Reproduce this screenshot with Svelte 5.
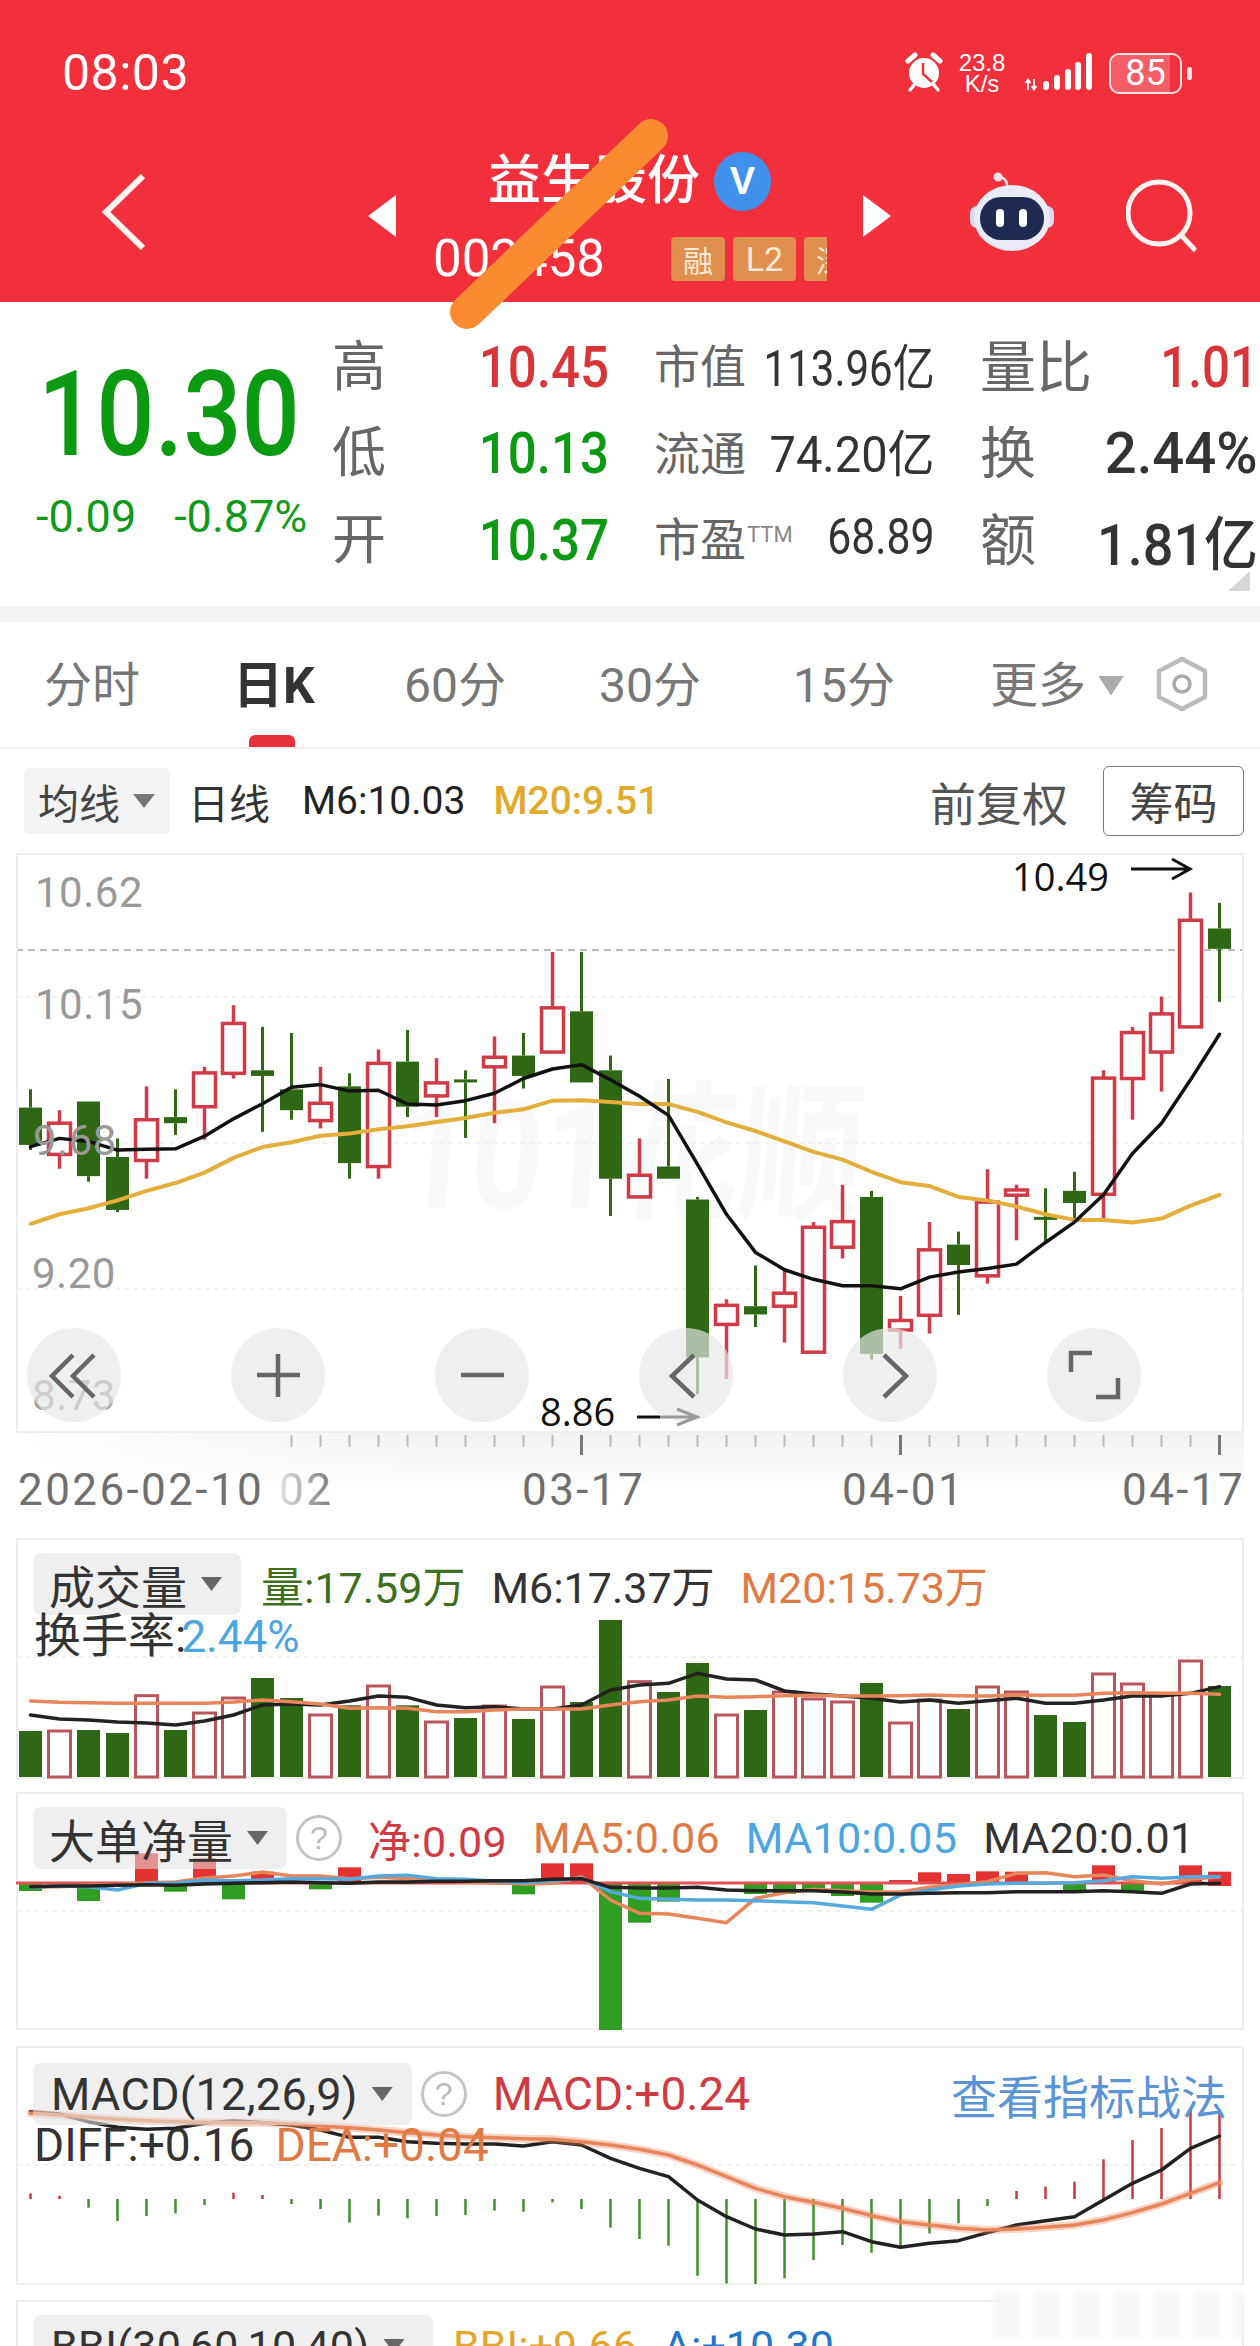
<script>
  // Candle x position, all charts share the same 42 day columns
  const colX = (i) => 30.5 + 29 * i;

  // Chart values below are sampled off the chart, these map them to page y
  const klineY = (v) => 850 + v / 2.306;
  const subY = (v) => 1530 + v / 3;
  const macdY = (v) => 2030 + v / 3;
  const pts = (arr, toY) => arr.map((v, i) => `${colX(i)},${toY(v)}`).join(' ');

  // [high, bodyTop, bodyBottom, low, up?]
  const candles = [
    [552,594,680,692,0],[600,630,702,735,1],[580,580,752,765,0],[665,708,830,835,0],
    [545,622,716,758,1],[552,616,630,657,0],[500,514,592,668,1],[358,400,515,527,1],
    [408,508,521,650,0],[422,552,600,622,0],[500,584,624,642,1],[515,545,722,758,0],
    [460,492,730,758,1],[415,488,592,616,0],[480,537,567,616,1],[508,529,536,664,0],
    [430,478,500,630,1],[422,474,521,550,0],[235,364,466,466,1],[235,372,536,536,0],
    [474,508,758,844,0],[665,750,800,800,1],[528,730,758,758,0],[800,806,1170,1255,0],
    [1036,1050,1094,1220,1],[958,1052,1071,1100,0],[965,1022,1052,1136,1],[858,870,1158,1158,1],
    [772,857,916,942,1],[786,800,1162,1175,0],[1028,1085,1107,1150,1],[858,922,1073,1115,1],
    [880,910,957,1072,0],[736,812,982,1000,1],[772,784,796,900,1],[780,846,850,905,0],
    [742,786,814,850,0],[508,526,794,850,1],[408,421,527,622,1],[338,378,466,557,1],
    [98,162,408,408,1],[122,181,228,350,0]
  ];
  const m6 = [684,665,672,692,690,689,660,620,585,547,541,556,554,586,588,578,561,527,505,495,530,568,612,725,840,928,968,990,1005,1005,1012,985,973,965,955,905,858,795,700,630,530,425];
  const m20 = [862,840,826,808,786,768,744,710,685,674,659,654,644,637,627,618,606,598,578,577,581,586,586,604,628,648,672,696,714,742,766,775,800,808,822,840,853,853,859,850,820,795];

  const ticks = Array.from({ length: 33 }, (_, i) => i + 9);
  const majorTicks = [19, 30, 41];

  // volume panel: [barTop, up?]
  const volume = [[603,0],[603,1],[600,0],[609,0],[497,1],[600,0],[549,1],[504,1],[444,0],[504,0],[555,1],[526,0],[468,1],[526,0],[576,1],[564,0],[528,1],[567,0],[471,1],[516,0],[270,0],[455,1],[486,0],[399,0],[555,1],[540,0],[486,1],[507,1],[516,1],[459,0],[579,1],[510,1],[537,0],[471,1],[486,1],[555,0],[576,0],[432,1],[462,1],[495,1],[393,1],[468,0]];
  const volM6 = [555,567,570,576,579,585,573,555,525,522,525,513,498,502,525,533,530,537,537,525,480,465,460,430,447,450,483,492,498,505,516,510,520,512,505,520,520,510,498,498,490,470];
  const volM20 = [513,517,518,520,520,520,520,516,510,515,522,535,533,535,545,545,540,537,537,537,525,515,510,498,502,500,497,496,498,498,497,495,497,498,495,496,496,490,488,490,490,493];

  // big order panel, bars around the zero line at 1060: [col, from, to]
  const orders = [[0,1060,1083],[2,1060,1113],[4,970,1060],[5,1060,1085],[6,985,1060],[7,1060,1108],[8,1025,1060],[10,1060,1078],[11,1012,1060],[17,1060,1093],[18,1000,1060],[19,1000,1060],[20,1060,1500],[21,1060,1178],[22,1060,1115],[25,1060,1092],[26,1060,1092],[27,1060,1080],[28,1060,1098],[29,1060,1118],[30,1050,1060],[31,1027,1060],[32,1032,1060],[33,1024,1060],[34,1025,1060],[36,1060,1085],[37,1006,1060],[38,1060,1082],[40,1006,1060],[41,1025,1068]];
  const ordBlack = [1070,1068,1068,1066,1064,1066,1062,1060,1058,1056,1058,1060,1056,1056,1054,1054,1052,1052,1048,1046,1072,1074,1074,1072,1080,1082,1082,1082,1086,1092,1092,1090,1088,1088,1085,1085,1085,1082,1085,1090,1062,1060];
  const ordBlue = [1072,1068,1070,1080,1060,1060,1050,1052,1050,1046,1046,1048,1038,1036,1046,1048,1054,1058,1052,1044,1085,1105,1108,1110,1110,1112,1115,1118,1128,1138,1095,1080,1068,1062,1060,1060,1058,1052,1040,1045,1040,1040];
  const ordOrange = [1070,1070,1066,1064,1058,1056,1044,1038,1026,1038,1038,1046,1042,1046,1052,1056,1058,1062,1060,1040,1110,1150,1152,1165,1178,1105,1088,1078,1082,1086,1086,1072,1065,1055,1030,1028,1040,1035,1052,1062,1048,1040];

  // macd bar tips, baseline at 507
  const macdBars = [490,497,533,573,558,550,525,488,495,522,537,578,557,565,558,555,542,545,517,537,593,627,647,737,760,762,745,690,645,668,650,610,580,528,483,470,455,388,330,294,240,240];
  const diff = [245,252,275,292,298,295,280,272,278,285,300,322,322,335,340,342,342,348,335,345,385,415,440,510,560,597,615,612,605,635,652,640,632,608,585,572,560,510,460,420,355,318];
  const dea = [250,255,262,268,272,275,277,278,278,282,288,293,300,308,315,320,323,326,328,335,345,358,375,405,440,475,500,517,535,557,575,585,595,600,597,592,585,570,548,522,490,458];

  // Quote panel rows
  const quoteRows = [
    { label: '高', value: '10.45', tone: 'up', sx: 0.88,
      midLabel: '市值', mid: '113.96亿', midSx: 0.84,
      sideLabel: '量比', side: '1.01', sideTone: 'up', sideSx: 0.85 },
    { label: '低', value: '10.13', tone: 'down', sx: 0.88,
      midLabel: '流通', mid: '74.20亿', midSx: 0.94,
      sideLabel: '换', side: '2.44%', sideTone: 'ink', sideSx: 0.97 },
    { label: '开', value: '10.37', tone: 'down', sx: 0.88,
      midLabel: '市盈', ttm: true, mid: '68.89', midSx: 0.855,
      sideLabel: '额', side: '1.81亿', sideTone: 'ink', sideSx: 0.93 }
  ];

  const tabs = ['分时', '日K', '60分', '30分', '15分'];
</script>

<div class="page">
  <header class="head">
    <div class="status">
      <span class="clock">08:03</span>
      <div class="status-right">
        <svg class="alarm" viewBox="0 0 40 42">
          <path d="M4 9 L11 3 M36 9 L29 3" stroke="#fff" stroke-width="5" stroke-linecap="round"/>
          <path d="M10 33 L6 38 M30 33 L34 38" stroke="#fff" stroke-width="3.5" stroke-linecap="round"/>
          <circle cx="20" cy="21" r="15" fill="#fff"/>
          <path d="M19 11 L19 22 L28 30" fill="none" stroke="#f2303c" stroke-width="2.5"/>
        </svg>
        <div class="speed"><span>23.8</span><span>K/s</span></div>
        <svg class="signal" viewBox="0 0 70 42">
          <path d="M4 28 V38 M1.5 31 L4 27.5 L6.5 31 M10 27 V37 M7.5 34 L10 37.5 L12.5 34" fill="none" stroke="#fff" stroke-width="1.8"/>
          <rect x="19" y="29" width="6" height="9" rx="3" fill="#fff"/>
          <rect x="30" y="23" width="6" height="15" rx="3" fill="#fff"/>
          <rect x="41" y="17" width="6" height="21" rx="3" fill="#fff"/>
          <rect x="51" y="10" width="6" height="28" rx="3" fill="#fff"/>
          <rect x="62" y="1" width="6" height="37" rx="3" fill="#fff"/>
        </svg>
        <div class="battery"><span>85</span></div>
        <div class="battery-cap"></div>
      </div>
    </div>

    <div class="nav">
      <svg class="back" viewBox="0 0 44 76">
        <path d="M41 2 L4 38 L41 74" fill="none" stroke="#fff3f0" stroke-width="6"/>
      </svg>
      <div class="arrow-left"></div>
      <div class="stock">
        <div class="title-row">
          <span class="title">益生股份</span>
          <span class="vbadge">V</span>
        </div>
        <div class="code-row">
          <span class="code">002458</span>
          <span class="code-sep"></span>
          <span class="tag">融</span>
          <span class="tag tag-l2">L2</span>
          <span class="tag">深</span>
        </div>
      </div>
      <div class="arrow-right"></div>
      <svg class="robot" viewBox="0 0 84 80">
        <path d="M37 16 C38 8 33 5 28 5" fill="none" stroke="#f7dfe6" stroke-width="2.5"/>
        <circle cx="28" cy="5" r="4.5" fill="#f7dfe6"/>
        <rect x="0" y="34" width="84" height="22" rx="7" fill="#dcd9f0"/>
        <ellipse cx="42" cy="46" rx="38" ry="33" fill="#ecebf9"/>
        <rect x="10" y="25" width="64" height="43" rx="21" fill="#1f2a50"/>
        <rect x="26" y="37" width="8" height="18" rx="4" fill="#fff"/>
        <rect x="49" y="37" width="8" height="18" rx="4" fill="#fff"/>
      </svg>
      <svg class="search" viewBox="0 0 72 74">
        <circle cx="33" cy="34" r="31" fill="none" stroke="#fff3f0" stroke-width="5"/>
        <path d="M55 56 L68 70" stroke="#fff3f0" stroke-width="5" stroke-linecap="round"/>
      </svg>
    </div>
  </header>

  <section class="quote">
    <div class="price-col">
      <div class="price"><span>10.30</span></div>
      <div class="change"><span>-0.09</span><span>-0.87%</span></div>
    </div>
    <div class="quote-grid">
      {#each quoteRows as row}
        <div class="cell">
          <span class="label-lg">{row.label}</span>
          <span class="num-lg {row.tone}" style:--sx={row.sx}>{row.value}</span>
        </div>
        <div class="cell">
          <span class="label-md">{row.midLabel}{#if row.ttm}<sup>TTM</sup>{/if}</span>
          <span class="num-md" style:--sx={row.midSx}>{row.mid}</span>
        </div>
        <div class="cell">
          <span class="label-lg label-side">{row.sideLabel}</span>
          <span class="num-lg {row.sideTone}" style:--sx={row.sideSx}>{row.side}</span>
        </div>
      {/each}
    </div>
    <div class="corner"></div>
  </section>
  <div class="band"></div>

  <nav class="tabs">
    {#each tabs as t, i}
      <span class="tab" class:active={i === 1}>{t}</span>
    {/each}
    <span class="tab tab-more">更多<i class="caret caret-light"></i></span>
    <svg class="hex" viewBox="0 0 56 56">
      <path d="M28 3 L51 15 V41 L28 53 L5 41 V15 Z" fill="none" stroke="#bbb" stroke-width="4.5" stroke-linejoin="round"/>
      <circle cx="28" cy="28" r="8" fill="none" stroke="#aaa" stroke-width="3.5"/>
    </svg>
    <div class="tab-mark"></div>
  </nav>

  <div class="toolbar">
    <div class="ma-chip">均线<i class="caret caret-ma"></i></div>
    <span class="tool-day">日线</span>
    <span class="tool-m6">M6:10.03</span>
    <span class="tool-m20">M20:9.51</span>
    <span class="tool-fq">前复权</span>
    <span class="tool-btn">筹码</span>
  </div>

  <div class="kline">
    <svg viewBox="16 853 1228 580">
      <text class="watermark" x="397" y="1208" textLength="464" lengthAdjust="spacingAndGlyphs" transform="translate(84 0) skewX(-4)">101花顺</text>

      <line class="dash-strong" x1="16" x2="1244" y1="950" y2="950"/>
      <line class="dash" x1="16" x2="1244" y1="997" y2="997"/>
      <line class="dash" x1="16" x2="1244" y1="1143" y2="1143"/>
      <line class="dash" x1="16" x2="1244" y1="1289" y2="1289"/>

      {#each candles as [hi, top, bot, lo, up], i}
        <g class={up ? 'c-up' : 'c-down'}>
          <line x1={colX(i)} x2={colX(i)} y1={klineY(hi)} y2={klineY(top)}/>
          <line x1={colX(i)} x2={colX(i)} y1={klineY(bot)} y2={klineY(lo)}/>
          {#if up}
            <rect x={colX(i) - 11} y={klineY(top)} width="22" height={Math.max(klineY(bot) - klineY(top), 3)}/>
          {:else}
            <rect x={colX(i) - 11.5} y={klineY(top)} width="23" height={Math.max(klineY(bot) - klineY(top), 3)}/>
          {/if}
        </g>
      {/each}

      <polyline class="ma20" points={pts(m20, klineY)}/>
      <polyline class="ma6" points={pts(m6, klineY)}/>

      <text class="axis" x="35" y="907">10.62</text>
      <text class="axis" x="35" y="1019">10.15</text>
      <text class="axis" x="33" y="1155">9.68</text>
      <text class="axis" x="32" y="1288">9.20</text>
      <text class="axis" x="32" y="1410">8.73</text>

      <circle class="fab" cx="74" cy="1375" r="47"/>
      <circle class="fab" cx="278" cy="1375" r="47"/>
      <circle class="fab" cx="482" cy="1375" r="47"/>
      <circle class="fab" cx="686" cy="1375" r="47"/>
      <circle class="fab" cx="890" cy="1375" r="47"/>
      <circle class="fab" cx="1094" cy="1375" r="47"/>
      <path class="fab-icon" d="M73 1355 L52 1376 L73 1397 M94 1355 L73 1376 L94 1397"/>
      <path class="fab-icon" d="M257 1375 H300 M278 1354 V1397"/>
      <path class="fab-icon" d="M461 1375 H504"/>
      <path class="fab-icon" d="M694 1355 L672 1376 L694 1397"/>
      <path class="fab-icon" d="M884 1355 L906 1376 L884 1397"/>
      <path class="fab-icon" d="M1071 1372 V1353 H1092 M1096 1397 H1118 V1378"/>

      <text class="note" x="1012" y="891">10.49</text>
      <path class="note-arrow" d="M1131 869 H1190 M1172 859 L1190 869 L1172 879"/>
      <text class="note" x="540" y="1426">8.86</text>
      <path class="note-arrow" d="M637 1417 H660"/>
      <path class="note-arrow faded" d="M660 1417 H697 M677 1409 L697 1417 L677 1425"/>
    </svg>
  </div>

  <div class="axis-row">
    <svg viewBox="0 1433 1260 105">
      <defs>
        <linearGradient id="axisShade" x1="0" y1="0" x2="0" y2="1">
          <stop offset="0" stop-color="#f2f2f2"/>
          <stop offset="1" stop-color="#fff"/>
        </linearGradient>
        <linearGradient id="axisFade" x1="0" y1="0" x2="1" y2="0">
          <stop offset="0" stop-color="#fff"/>
          <stop offset="1" stop-color="#fff" stop-opacity="0"/>
        </linearGradient>
        <linearGradient id="dateFade" x1="0" y1="0" x2="1" y2="0">
          <stop offset="0" stop-color="#e2e2e2"/>
          <stop offset="1" stop-color="#777"/>
        </linearGradient>
      </defs>
      <rect x="16" y="1433" width="1228" height="60" fill="url(#axisShade)"/>
      <rect x="16" y="1433" width="420" height="60" fill="url(#axisFade)"/>
      {#each ticks as t}
        {#if majorTicks.includes(t)}
          <line class="tick-major" x1={colX(t)} x2={colX(t)} y1="1435" y2="1455"/>
        {:else}
          <line class="tick" x1={colX(t)} x2={colX(t)} y1="1435" y2="1447"/>
        {/if}
      {/each}
      <text class="date" x="18" y="1505">2026-02-10</text>
      <text class="date date-ghost" x="279" y="1505">02</text>
      <text class="date" x="522" y="1505">03-17</text>
      <text class="date" x="842" y="1505">04-01</text>
      <text class="date" x="1122" y="1505">04-17</text>
    </svg>
  </div>

  <section class="panel panel-vol">
    <svg class="panel-chart" viewBox="16 1538 1228 241">
      <line class="dash" x1="16" x2="1244" y1="1657" y2="1657"/>
      {#each volume as [top, up], i}
        {#if up}
          <rect class="vol-up" x={colX(i) - 11} y={subY(top)} width="22" height={1777 - subY(top)}/>
        {:else}
          <rect class="vol-down" x={colX(i) - 11.5} y={subY(top)} width="23" height={1777 - subY(top)}/>
        {/if}
      {/each}
      <polyline class="line-ink" points={pts(volM6, subY)}/>
      <polyline class="line-orange" points={pts(volM20, subY)}/>
    </svg>
    <div class="ind-row">
      <div class="chip">成交量<i class="caret"></i></div>
      <span class="ind c-green">量:17.59万</span>
      <span class="ind">M6:17.37万</span>
      <span class="ind c-orange">M20:15.73万</span>
    </div>
    <div class="ind-row2">
      <span class="turnover">换手率:<b>2.44%</b></span>
    </div>
  </section>

  <section class="panel panel-big">
    <svg class="panel-chart" viewBox="16 1792 1228 238">
      <line class="dash" x1="16" x2="1244" y1="1911" y2="1911"/>
      {#each orders as [col, from, to]}
        <rect class={from < 1060 ? 'ord-up' : 'ord-down'} x={colX(col) - 11.5} y={subY(from)} width="23" height={(to - from) / 3}/>
      {/each}
      <line class="zero" x1="16" x2="1205" y1="1883" y2="1883"/>
      <polyline class="line-orange" points={pts(ordOrange, subY)}/>
      <polyline class="line-blue" points={pts(ordBlue, subY)}/>
      <polyline class="line-ink" points={pts(ordBlack, subY)}/>
    </svg>
    <div class="ind-row">
      <div class="chip">大单净量<i class="caret"></i></div>
      <span class="help">?</span>
      <span class="ind wide c-red">净:0.09</span>
      <span class="ind wide c-orange">MA5:0.06</span>
      <span class="ind wide c-blue">MA10:0.05</span>
      <span class="ind wide">MA20:0.01</span>
    </div>
  </section>

  <section class="panel panel-macd">
    <svg class="panel-chart" viewBox="16 2046 1228 239">
      <line class="dash" x1="16" x2="1244" y1="2165" y2="2165"/>
      {#each macdBars as tip, i}
        <line class={tip < 507 ? 'macd-up' : 'macd-down'} x1={colX(i)} x2={colX(i)} y1={macdY(507)} y2={macdY(tip)}/>
      {/each}
      <polyline class="line-ink" points={pts(diff, macdY)}/>
      <polyline class="line-halo" points={pts(dea, macdY)}/>
      <polyline class="line-orange" points={pts(dea, macdY)}/>
    </svg>
    <div class="ind-row">
      <div class="chip chip-macd">MACD(12,26,9)<i class="caret"></i></div>
      <span class="help">?</span>
      <span class="ind c-red macd-val">MACD:+0.24</span>
      <span class="ind macd-link">查看指标战法</span>
    </div>
    <div class="ind-row3">
      <span class="ind">DIFF:+0.16</span>
      <span class="ind c-orange">DEA:+0.04</span>
    </div>
  </section>

  <section class="panel panel-bbi">
    <div class="ind-row">
      <div class="chip chip-bbi">BBI(30,60,10,40)<i class="caret"></i></div>
      <span class="ind c-gold">BBI:+9.66</span>
      <span class="ind c-navy">A:+10.30</span>
    </div>
    <div class="smudge"></div>
  </section>

  <!-- hand-drawn censor stroke over the stock code -->
  <svg class="slash" viewBox="0 0 1260 340">
    <line x1="651" y1="136" x2="467" y2="312" stroke="#fb8b30" stroke-width="34" stroke-linecap="round"/>
  </svg>
</div>

<style>
  :global(body) {
    margin: 0;
    background: #fff;
  }

  .page {
    position: relative;
    width: 1260px;
    height: 2346px;
    overflow: hidden;
    background: #fff;
    color: #333;
    font-family: Roboto, "Noto Sans CJK SC", sans-serif;
  }

  svg {
    display: block;
  }

  /* ---- red header ---- */
  .head {
    height: 302px;
    background: #f2303c;
    color: #fff;
    box-sizing: border-box;
  }

  .status {
    display: flex;
    align-items: center;
    height: 66px;
    padding: 40px 68px 0 62px;
  }

  .clock {
    font-size: 50px;
    letter-spacing: 0.5px;
  }

  .status-right {
    margin-left: auto;
    display: flex;
    align-items: center;
  }

  .alarm {
    width: 40px;
    height: 42px;
  }

  .speed {
    display: flex;
    flex-direction: column;
    align-items: center;
    width: 50px;
    margin-left: 13px;
    font-size: 24px;
    line-height: 21px;
    font-family: "Liberation Sans", sans-serif;
  }

  .signal {
    width: 70px;
    height: 42px;
    margin-left: 17px;
  }

  .battery {
    display: flex;
    align-items: center;
    justify-content: center;
    box-sizing: border-box;
    width: 73px;
    height: 41px;
    margin-left: 15px;
    border: 2.5px solid #ffe3e3;
    border-radius: 10px;
    background: linear-gradient(90deg, rgba(255,255,255,.22) 85%, transparent 85%);
    font-size: 36px;
  }

  .battery-cap {
    width: 5px;
    height: 13px;
    margin-left: 5px;
    border-radius: 2px;
    background: #ffe3e3;
  }

  .nav {
    display: flex;
    align-items: center;
    height: 172px;
    padding: 24px 0 0 102px;
  }

  .back {
    width: 44px;
    height: 76px;
    margin-top: -8px;
  }

  .arrow-left,
  .arrow-right {
    width: 28px;
    height: 42px;
    background: #fff;
  }

  .arrow-left {
    margin-left: 222px;
    clip-path: polygon(100% 0, 100% 100%, 0 50%);
  }

  .arrow-right {
    margin-left: 36px;
    clip-path: polygon(0 0, 0 100%, 100% 50%);
  }

  .stock {
    width: 392px;
    margin-left: 39px;
    overflow: hidden;
  }

  .title-row {
    display: flex;
    align-items: center;
    gap: 14px;
    height: 60px;
    padding-left: 53px;
  }

  .title {
    font-size: 53px;
    font-weight: 500;
    line-height: 60px;
  }

  .vbadge {
    display: flex;
    align-items: center;
    justify-content: center;
    width: 57px;
    height: 59px;
    border-radius: 50%;
    background: #4191ec;
    font-family: "Liberation Sans", sans-serif;
    font-size: 38px;
    font-weight: 700;
  }

  .code-row {
    display: flex;
    align-items: center;
    height: 44px;
    margin-top: 26px;
    margin-left: -2px;
  }

  .code {
    font-size: 51px;
    line-height: 44px;
  }

  .code-sep {
    width: 2px;
    height: 42px;
    margin: 0 46px 0 20px;
    background: #f49a6a;
  }

  .tag {
    flex: none;
    display: flex;
    align-items: center;
    justify-content: center;
    width: 54px;
    height: 44px;
    margin-right: 8px;
    border-radius: 4px;
    background: #e08f4e;
    color: #fdebd8;
    font-size: 30px;
  }

  .tag-l2 {
    width: 63px;
    font-size: 34px;
  }

  .robot {
    width: 84px;
    height: 80px;
    margin-left: 79px;
    margin-top: -8px;
  }

  .search {
    width: 72px;
    height: 74px;
    margin-left: 72px;
  }

  /* ---- quote ---- */
  .quote {
    position: relative;
    display: flex;
    height: 304px;
    padding-top: 20px;
    box-sizing: border-box;
  }

  .price-col {
    width: 332px;
    flex: none;
  }

  .price {
    height: 182px;
    line-height: 186px;
    padding-left: 38px;
    color: #0b9a12;
    font-size: 118px;
    font-weight: 500;
  }

  .price span {
    display: inline-block;
    transform: scaleX(0.87);
    transform-origin: left center;
  }

  .change {
    display: flex;
    gap: 38px;
    height: 26px;
    line-height: 26px;
    padding-left: 36px;
    color: #0f9a1c;
    font-size: 45px;
  }

  .quote-grid {
    display: grid;
    grid-template-columns: 277px 281px 278px;
    grid-auto-rows: 86.5px;
    column-gap: 45px;
  }

  .cell {
    display: flex;
    align-items: center;
    justify-content: space-between;
  }

  .label-lg {
    padding-bottom: 6px;
    font-size: 54px;
    color: #666;
  }

  .label-side {
    font-size: 56px;
  }

  .label-md {
    padding-bottom: 4px;
    font-size: 46px;
    color: #666;
    white-space: nowrap;
  }

  .label-md sup {
    font-size: 22px;
    vertical-align: 14px;
    line-height: 0;
    color: #888;
    margin-left: 1px;
  }

  .num-lg,
  .num-md {
    display: inline-block;
    margin-left: -60px;
    transform: scaleX(var(--sx));
    transform-origin: right center;
    white-space: nowrap;
  }

  .num-lg {
    padding-top: 3px;
    font-size: 58px;
    font-weight: 500;
  }

  .num-md {
    padding-bottom: 3px;
    font-size: 50px;
    color: #333;
  }

  .up { color: #d9343a; }
  .down { color: #0b9a12; }
  .ink { color: #333; }

  .corner {
    position: absolute;
    right: 10px;
    bottom: 15px;
    width: 22px;
    height: 20px;
    background: #d6d6d6;
    clip-path: polygon(100% 0, 100% 100%, 0 100%);
  }

  .band {
    height: 16px;
    background: #f5f5f5;
  }

  /* ---- tabs ---- */
  .tabs {
    position: relative;
    display: grid;
    grid-template-columns: 189px 171px 195px 194px 197px 164px auto;
    align-items: center;
    height: 127px;
    padding: 2px 0 0 44px;
    box-sizing: border-box;
    border-bottom: 2px solid #eee;
  }

  .tab {
    font-size: 48px;
    color: #777;
    line-height: 1;
  }

  .tab.active {
    color: #333;
    font-size: 50px;
    font-weight: 700;
  }

  .tab-more {
    display: flex;
    align-items: center;
  }

  .hex {
    width: 56px;
    height: 56px;
    margin-top: -4px;
  }

  .tab-mark {
    position: absolute;
    left: 249px;
    bottom: 0;
    width: 46px;
    height: 12px;
    border-radius: 6px 6px 0 0;
    background: #e6313c;
  }

  .caret {
    display: inline-block;
    flex: none;
    width: 21px;
    height: 14px;
    margin-left: 14px;
    background: #666;
    clip-path: polygon(0 0, 100% 0, 50% 100%);
  }

  .caret-light {
    width: 26px;
    height: 20px;
    margin-left: 12px;
    background: #aaa;
  }

  .caret-ma {
    width: 22px;
    margin-left: 13px;
    background: #777;
  }

  /* ---- toolbar ---- */
  .toolbar {
    display: flex;
    align-items: center;
    height: 104px;
    padding-left: 24px;
  }

  .ma-chip {
    display: flex;
    align-items: center;
    box-sizing: border-box;
    width: 146px;
    height: 66px;
    padding-left: 14px;
    border-radius: 6px;
    background: #f3f3f3;
    font-size: 41px;
    color: #444;
  }

  .tool-day {
    margin-left: 18px;
    font-size: 41px;
    color: #333;
  }

  .tool-m6 {
    margin-left: 32px;
    font-size: 39px;
    color: #222;
  }

  .tool-m20 {
    margin-left: 28px;
    font-size: 39px;
    font-weight: 500;
    color: #e0aa2a;
  }

  .tool-fq {
    margin-left: auto;
    font-size: 46px;
    color: #555;
  }

  .tool-btn {
    display: flex;
    align-items: center;
    justify-content: center;
    box-sizing: border-box;
    width: 141px;
    height: 70px;
    margin: 0 16px 0 35px;
    border: 1.5px solid #777;
    border-radius: 6px;
    font-size: 44px;
    color: #444;
  }

  /* ---- k line ---- */
  .kline {
    box-sizing: border-box;
    width: 1228px;
    height: 580px;
    margin-left: 16px;
    outline: 2px solid #eee;
    outline-offset: -2px;
  }

  .kline svg {
    width: 1228px;
    height: 580px;
  }

  .watermark {
    font-size: 150px;
    font-weight: 700;
    fill: #f9f9f9;
  }

  .dash {
    stroke: #eee;
    stroke-width: 1.5;
    stroke-dasharray: 5 4;
  }

  .dash-strong {
    stroke: #bbb;
    stroke-width: 2;
    stroke-dasharray: 7 5;
  }

  .c-up line,
  .c-up rect {
    stroke: #d13b47;
    stroke-width: 3.5;
  }

  .c-up rect {
    fill: #fff;
  }

  .c-down line {
    stroke: #2f6815;
    stroke-width: 3;
  }

  .c-down rect {
    fill: #2f6815;
  }

  polyline {
    fill: none;
    stroke-linejoin: round;
    stroke-linecap: round;
  }

  .ma6 {
    stroke: #111;
    stroke-width: 3.5;
  }

  .ma20 {
    stroke: #e5ad3a;
    stroke-width: 4;
  }

  .axis {
    font-size: 42px;
    fill: #999;
    letter-spacing: 0.5px;
  }

  .fab {
    fill: rgba(232, 232, 232, 0.68);
  }

  .fab-icon {
    fill: none;
    stroke: #666;
    stroke-width: 4.5;
  }

  .note {
    font-family: "Open Sans", sans-serif;
    font-size: 38px;
    fill: #111;
  }

  .note-arrow {
    fill: none;
    stroke: #111;
    stroke-width: 3;
  }

  .note-arrow.faded {
    stroke: #999;
  }

  /* ---- date axis ---- */
  .axis-row {
    height: 105px;
  }

  .axis-row svg {
    width: 1260px;
    height: 105px;
  }

  .tick {
    stroke: #bbb;
    stroke-width: 2;
  }

  .tick-major {
    stroke: #777;
    stroke-width: 3;
  }

  .date {
    font-size: 44px;
    letter-spacing: 2.4px;
    fill: #6f6f6f;
  }

  .date-ghost {
    fill: url(#dateFade);
  }

  /* ---- indicator panels ---- */
  .panel {
    position: relative;
    box-sizing: border-box;
    width: 1228px;
    margin-left: 16px;
    outline: 2px solid #eee;
    outline-offset: -2px;
  }

  .panel-vol {
    height: 241px;
    margin-bottom: 13px;
  }

  .panel-big {
    height: 238px;
    margin-bottom: 16px;
  }

  .panel-macd {
    height: 239px;
    margin-bottom: 15px;
  }

  .panel-bbi {
    height: 60px;
  }

  .panel-chart {
    position: absolute;
    left: 0;
    top: 0;
    width: 1228px;
    height: 100%;
  }

  .ind-row {
    position: relative;
    display: flex;
    align-items: center;
    gap: 26px;
    padding: 15px 17px 0;
    color: #333;
  }

  .chip {
    display: flex;
    align-items: center;
    flex: none;
    height: 62px;
    margin-right: -6px;
    padding: 0 19px 0 16px;
    border-radius: 8px;
    background: rgba(225, 225, 225, 0.55);
    font-size: 46px;
    color: #333;
  }

  .chip-macd {
    margin-right: -6px;
    padding-left: 18px;
    font-size: 45px;
    letter-spacing: 0.3px;
  }

  .chip-bbi {
    box-sizing: border-box;
    width: 400px;
    padding-left: 18px;
    font-size: 43px;
    letter-spacing: 0.3px;
  }

  .ind {
    font-size: 43px;
    white-space: nowrap;
    color: #333;
  }

  .ind.wide {
    letter-spacing: 0.3px;
  }

  .c-green { color: #3f7020; }
  .c-orange { color: #e07a45; }
  .c-red { color: #cf3a43; }
  .c-blue { color: #4aa5e0; }
  .c-gold { color: #e5a52b; }
  .c-navy { color: #1f78c8; }

  .help {
    display: flex;
    align-items: center;
    justify-content: center;
    flex: none;
    box-sizing: border-box;
    width: 46px;
    height: 46px;
    margin-left: -11px;
    border: 3px solid #c4c4c4;
    border-radius: 50%;
    color: #bbb;
    font-size: 32px;
    font-family: "Liberation Sans", sans-serif;
  }

  .macd-val {
    font-size: 46px;
  }

  .macd-link {
    margin-left: auto;
    font-size: 46px;
    color: #5a94d6;
  }

  .ind-row2 {
    position: relative;
    padding-left: 18px;
    line-height: 42px;
  }

  .turnover {
    font-size: 47px;
    color: #333;
  }

  .turnover b {
    margin-left: -5px;
    font-weight: 400;
    color: #4aa5e0;
    font-size: 44px;
  }

  .ind-row3 {
    position: relative;
    display: flex;
    gap: 21px;
    margin-top: -9px;
    padding-left: 18px;
  }

  .ind-row3 .ind {
    font-size: 46px;
  }

  .vol-up {
    fill: #fff;
    stroke: #b9565d;
    stroke-width: 3;
    fill-opacity: 0;
  }

  .vol-down {
    fill: #2f6815;
  }

  .line-ink {
    stroke: #222;
    stroke-width: 3.5;
  }

  .line-orange {
    stroke: #e8855a;
    stroke-width: 3.5;
  }

  .line-blue {
    stroke: #55a9dc;
    stroke-width: 3.5;
  }

  .line-halo {
    stroke: rgba(232, 133, 90, 0.35);
    stroke-width: 8;
  }

  .zero {
    stroke: #e25050;
    stroke-width: 3;
  }

  .ord-up {
    fill: #e43232;
  }

  .ord-down {
    fill: #2f9c22;
  }

  .macd-up {
    stroke: #c9393e;
    stroke-width: 2.5;
  }

  .macd-down {
    stroke: #3f8f2c;
    stroke-width: 2.5;
  }

  .smudge {
    position: absolute;
    right: 0;
    top: -8px;
    width: 250px;
    height: 46px;
    background: repeating-linear-gradient(90deg, #f6f6f6 0 26px, #fff 26px 40px);
    filter: blur(3px);
  }

  .slash {
    position: absolute;
    left: 0;
    top: 0;
    width: 1260px;
    height: 340px;
    pointer-events: none;
  }
</style>
